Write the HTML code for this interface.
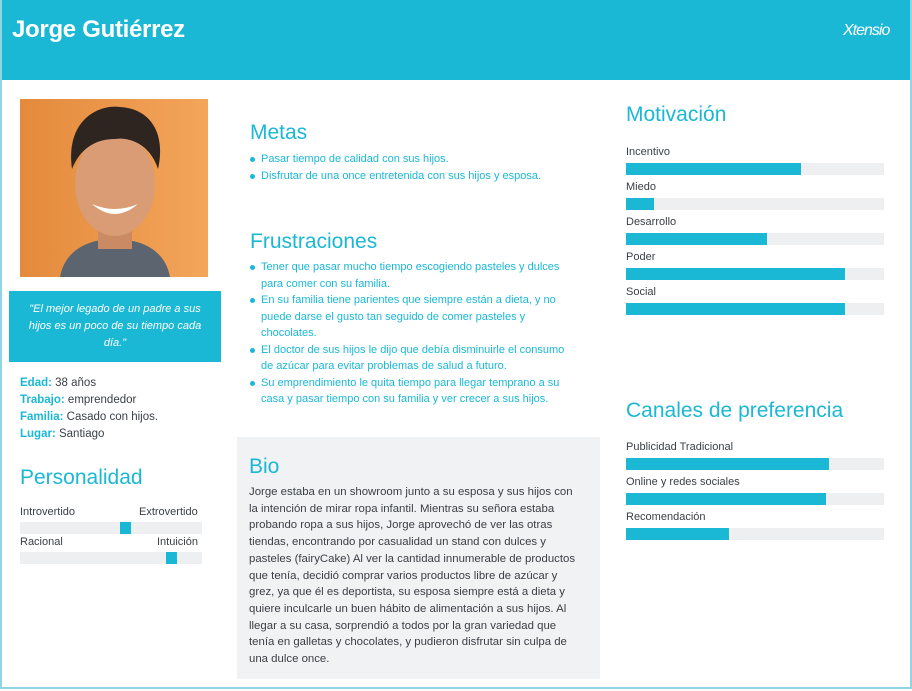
<!DOCTYPE html>
<html><head><meta charset="utf-8"><style>
*{margin:0;padding:0;box-sizing:border-box}
body{width:912px;height:691px;position:relative;background:#fff;font-family:"Liberation Sans",sans-serif;color:#3a3f45;overflow:hidden}
.a{position:absolute;white-space:nowrap}
.frame{position:absolute;left:0;top:0;width:912px;height:689px;border:2px solid #8fd5e6;border-top:none}
.hdr{position:absolute;left:0;top:0;width:912px;height:80px;background:#1bb8d5}
.h2{font-weight:300;color:#1bb8d5;font-size:21px}
.t{font-size:11.5px;color:#3a3f45}
.bar{position:absolute;height:12px;background:#eeeff1}
.bar i{position:absolute;left:0;top:0;height:12px;background:#1bb8d5}
.li{font-size:11px;color:#1bb8d5;line-height:16.5px}
ul{list-style:none}
ul li{position:relative;padding-left:12px}
ul li:before{content:"";position:absolute;left:1px;top:6px;width:5px;height:5px;border-radius:50%;background:#1bb8d5}
</style></head><body>
<div class="hdr"></div>
<div class="frame"></div>
<div class="a" style="left:12px;top:16px;font-size:24px;font-weight:bold;color:#fff;letter-spacing:-0.3px">Jorge Gutiérrez</div>
<div class="a" style="left:843px;top:22px;font-size:16px;color:#fff;font-style:italic;letter-spacing:-1px">Xtensio</div>

<svg class="a" style="left:20px;top:99px" width="188" height="178" viewBox="0 0 188 178">
<defs><linearGradient id="g" x1="0" x2="1"><stop offset="0" stop-color="#e48a3c"/><stop offset="1" stop-color="#f3a55a"/></linearGradient></defs>
<rect width="188" height="178" fill="url(#g)"/>
<path d="M40 178 C45 150 70 140 94 140 C120 140 145 150 150 178Z" fill="#5c6470"/>
<path d="M78 120 L78 150 L112 150 L112 120Z" fill="#c98a64"/>
<ellipse cx="95" cy="85" rx="40" ry="52" fill="#d99c74"/>
<path d="M52 70 C45 20 80 5 100 8 C135 10 145 40 138 70 C130 45 110 38 95 40 C75 40 60 50 52 70Z" fill="#2f2520"/>
<path d="M72 105 Q95 125 118 105 Q95 115 72 105Z" fill="#fff"/>
</svg>

<div class="a" style="left:9px;top:291px;width:212px;height:71px;background:#1bb8d5"></div>
<div class="a" style="left:9px;top:301px;width:212px;text-align:center;color:#fff;font-style:italic;font-size:11px;line-height:16.8px">"El mejor legado de un padre a sus<br>hijos es un poco de su tiempo cada<br>día."</div>

<div class="a t" style="left:20px;top:375px;line-height:17px;font-size:11.5px"><b style="color:#1bb8d5">Edad:</b> 38 años<br><b style="color:#1bb8d5">Trabajo:</b> emprendedor<br><b style="color:#1bb8d5">Familia:</b> Casado con hijos.<br><b style="color:#1bb8d5">Lugar:</b> Santiago</div>

<div class="a h2" style="left:20px;top:466px">Personalidad</div>
<div class="a t" style="left:20px;top:506px;font-size:11px">Introvertido</div>
<div class="a t" style="left:139px;top:506px;font-size:11px">Extrovertido</div>
<div class="bar" style="left:20px;top:522px;width:182px"></div>
<div class="a" style="left:120px;top:522px;width:11px;height:12px;background:#1bb8d5"></div>
<div class="a t" style="left:20px;top:536px;font-size:11px">Racional</div>
<div class="a t" style="left:157px;top:536px;font-size:11px">Intuición</div>
<div class="bar" style="left:20px;top:552px;width:182px"></div>
<div class="a" style="left:166px;top:552px;width:11px;height:12px;background:#1bb8d5"></div>

<div class="a h2" style="left:250px;top:121px">Metas</div>
<ul class="a li" style="left:249px;top:151px"><li>Pasar tiempo de calidad con sus hijos.</li><li>Disfrutar de una once entretenida con sus hijos y esposa.</li></ul>
<div class="a h2" style="left:250px;top:230px">Frustraciones</div>
<ul class="a li" style="left:249px;top:259px"><li>Tener que pasar mucho tiempo escogiendo pasteles y dulces<br>para comer con su familia.</li><li>En su familia tiene parientes que siempre están a dieta, y no<br>puede darse el gusto tan seguido de comer pasteles y<br>chocolates.</li><li>El doctor de sus hijos le dijo que debía disminuirle el consumo<br>de azúcar para evitar problemas de salud a futuro.</li><li>Su emprendimiento le quita tiempo para llegar temprano a su<br>casa y pasar tiempo con su familia y ver crecer a sus hijos.</li></ul>

<div class="a" style="left:237px;top:437px;width:363px;height:242px;background:#f1f2f4"></div>
<div class="a h2" style="left:249px;top:455px">Bio</div>
<div class="a t" style="left:249px;top:484px;line-height:16.7px;font-size:11.4px">Jorge estaba en un showroom junto a su esposa y sus hijos con<br>la intención de mirar ropa infantil. Mientras su señora estaba<br>probando ropa a sus hijos, Jorge aprovechó de ver las otras<br>tiendas, encontrando por casualidad un stand con dulces y<br>pasteles (fairyCake) Al ver la cantidad innumerable de productos<br>que tenía, decidió comprar varios productos libre de azúcar y<br>grez, ya que él es deportista, su esposa siempre está a dieta y<br>quiere inculcarle un buen hábito de alimentación a sus hijos. Al<br>llegar a su casa, sorprendió a todos por la gran variedad que<br>tenía en galletas y chocolates, y pudieron disfrutar sin culpa de<br>una dulce once.</div>

<div class="a h2" style="left:626px;top:103px">Motivación</div>
<div class="a t" style="left:626px;top:146px;font-size:11px">Incentivo</div>
<div class="bar" style="left:626px;top:163px;width:258px"><i style="width:175px"></i></div>
<div class="a t" style="left:626px;top:181px;font-size:11px">Miedo</div>
<div class="bar" style="left:626px;top:198px;width:258px"><i style="width:28px"></i></div>
<div class="a t" style="left:626px;top:216px;font-size:11px">Desarrollo</div>
<div class="bar" style="left:626px;top:233px;width:258px"><i style="width:141px"></i></div>
<div class="a t" style="left:626px;top:251px;font-size:11px">Poder</div>
<div class="bar" style="left:626px;top:268px;width:258px"><i style="width:219px"></i></div>
<div class="a t" style="left:626px;top:286px;font-size:11px">Social</div>
<div class="bar" style="left:626px;top:303px;width:258px"><i style="width:219px"></i></div>

<div class="a h2" style="left:626px;top:399px">Canales de preferencia</div>
<div class="a t" style="left:626px;top:441px;font-size:11px">Publicidad Tradicional</div>
<div class="bar" style="left:626px;top:458px;width:258px"><i style="width:203px"></i></div>
<div class="a t" style="left:626px;top:476px;font-size:11px">Online y redes sociales</div>
<div class="bar" style="left:626px;top:493px;width:258px"><i style="width:200px"></i></div>
<div class="a t" style="left:626px;top:511px;font-size:11px">Recomendación</div>
<div class="bar" style="left:626px;top:528px;width:258px"><i style="width:103px"></i></div>
</body></html>
